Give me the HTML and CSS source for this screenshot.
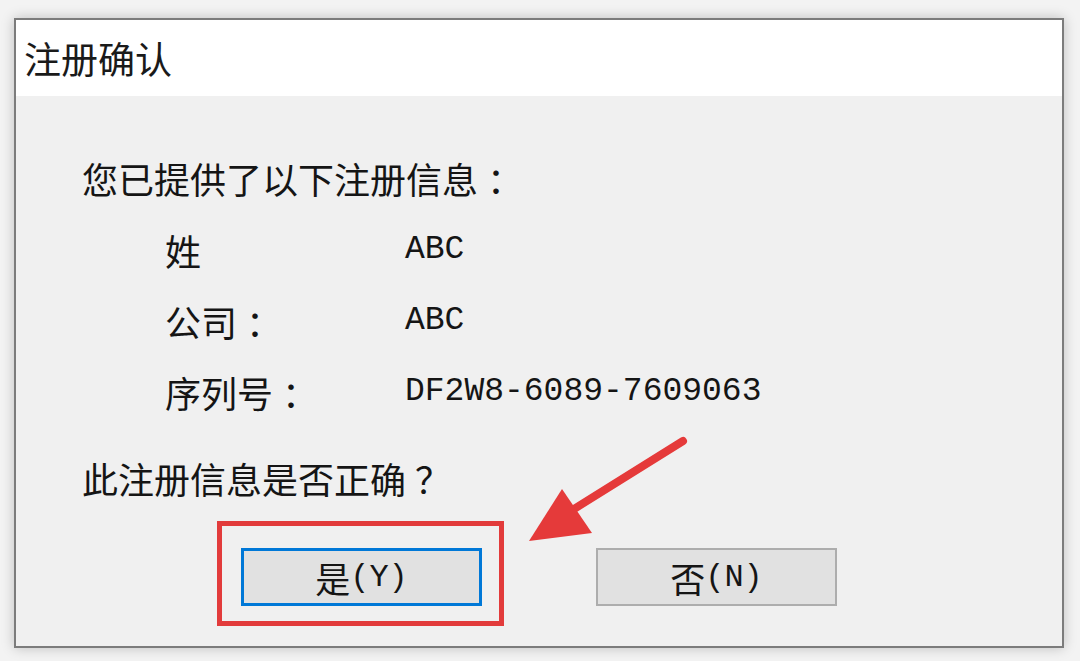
FILE: index.html
```html
<!DOCTYPE html>
<html lang="zh-CN">
<head>
<meta charset="utf-8">
<title>注册确认</title>
<link rel="stylesheet" href="styles.css">
</head>
<body>
<div class="dialog">
  <div class="titlebar">注册确认</div>
  <div class="content">
    <p class="line">您已提供了以下注册信息<span class="punct">：</span></p>
    <div class="info">
      <span class="label">姓</span><span class="value">ABC</span>
      <span class="label">公司<span class="punct">：</span></span><span class="value">ABC</span>
      <span class="label">序列号<span class="punct">：</span></span><span class="value">DF2W8-6089-7609063</span>
    </div>
    <p class="line question">此注册信息是否正确<span class="punct">？</span></p>
    <div class="buttons">
      <button class="btn btn-default">是<span class="key">(Y)</span></button>
      <button class="btn">否<span class="key">(N)</span></button>
    </div>
  </div>
</div>
<div class="highlight"></div>
<svg class="arrow" width="1080" height="661" viewBox="0 0 1080 661">
  <line x1="683" y1="441" x2="566" y2="514" stroke="#e53a3a" stroke-width="8" stroke-linecap="round"/>
  <polygon points="529,541 562,489 592,533" fill="#e53a3a"/>
</svg>
</body>
</html>
```
FILE: styles.css
```css
html, body {
  margin: 0;
  padding: 0;
}
body {
  width: 1080px;
  height: 661px;
  background: #f3f3f3;
  overflow: hidden;
  position: relative;
  font-family: "Noto Sans CJK SC", "Noto Sans", sans-serif;
  color: #151515;
}
.dialog {
  margin: 18px 0 0 14px;
  width: 1050px;
  height: 630px;
  box-sizing: border-box;
  border: 2px solid #7c7c7c;
  background: #f0f0f0;
  box-shadow: 0 0 12px rgba(0, 0, 0, 0.22);
  display: flex;
  flex-direction: column;
}
.titlebar {
  height: 76px;
  background: #ffffff;
  display: flex;
  align-items: center;
  padding-left: 8px;
  font-size: 37px;
  color: #1a1a1a;
}
.content {
  padding: 62px 0 0 66px;
  font-size: 36px;
}
.punct {
  padding-left: 9px;
}
.line {
  margin: 0;
  height: 40px;
  line-height: 40px;
}
.info {
  display: grid;
  grid-template-columns: 240px auto;
  grid-auto-rows: 40px;
  row-gap: 31px;
  margin: 32px 0 0 83px;
}
.label, .value {
  line-height: 40px;
}
.value {
  font-family: "Liberation Mono", monospace;
  font-size: 33px;
}
.question {
  margin-top: 46px;
}
.buttons {
  display: flex;
  gap: 114px;
  margin: 50px 0 0 159px;
}
.btn {
  width: 241px;
  height: 58px;
  box-sizing: border-box;
  background: #e1e1e1;
  border: 2px solid #adadad;
  font-family: "Noto Sans CJK SC", sans-serif;
  font-size: 35px;
  color: #151515;
  padding: 0;
  display: flex;
  align-items: center;
  justify-content: center;
}
.btn-default {
  border: 3px solid #0078d7;
}
.key {
  font-family: "Liberation Mono", monospace;
  font-size: 32px;
}
.highlight {
  position: absolute;
  left: 217px;
  top: 521px;
  width: 287px;
  height: 105px;
  box-sizing: border-box;
  border: 5px solid #e23b3b;
}
.arrow {
  position: absolute;
  left: 0;
  top: 0;
}
```
